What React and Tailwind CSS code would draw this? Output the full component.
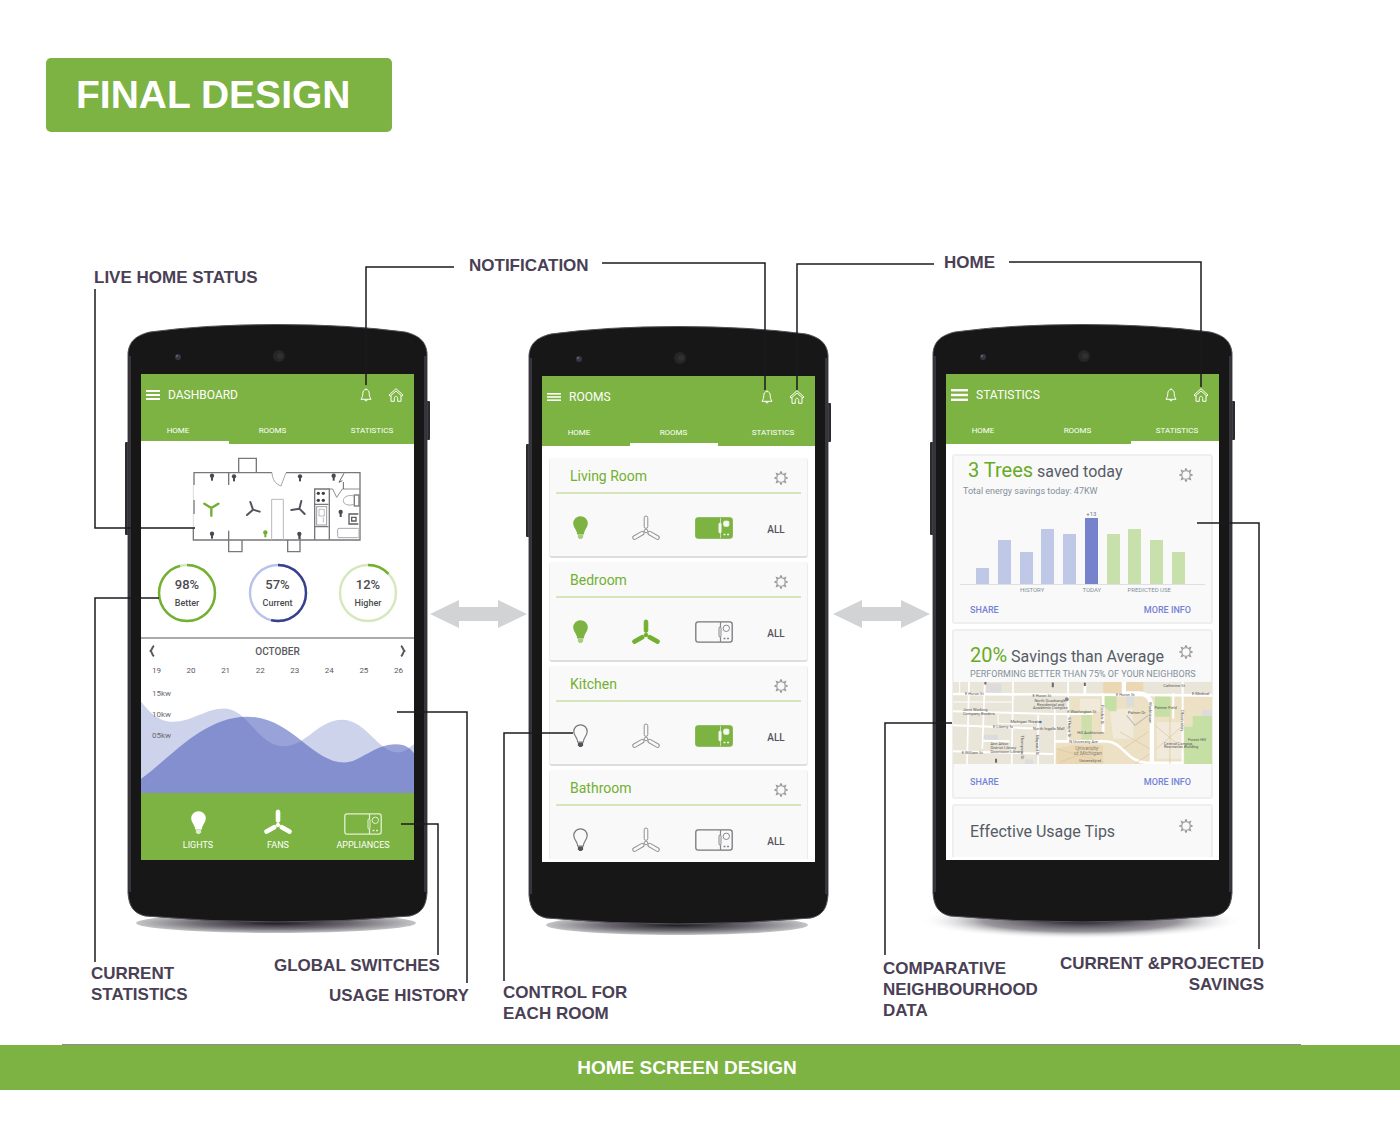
import React from "react";

/* ---------- icons ---------- */

function MenuIcon({ className }) {
  return (
    <svg className={className} viewBox="0 0 14 10" preserveAspectRatio="none" fill="#fff">
      <rect width="14" height="2" />
      <rect y="4" width="14" height="2" />
      <rect y="8" width="14" height="2" />
    </svg>
  );
}

function BellIcon() {
  return (
    <svg className="h-[14px] w-3" viewBox="0 0 12 14" fill="none" stroke="#fff" strokeWidth="1" strokeLinejoin="round">
      <path d="M6 1.5C3.8 1.6 2.8 3.4 2.8 5.4C2.8 7.8 2.2 9.4 1 11.3H11C9.8 9.4 9.2 7.8 9.2 5.4C9.2 3.4 8.2 1.6 6 1.5Z" />
      <path d="M6 .4V1.5M4.7 11.5C4.7 13.4 7.3 13.4 7.3 11.5" />
    </svg>
  );
}

function HomeIcon() {
  return (
    <svg className="h-[14px] w-4" viewBox="0 0 16 14" fill="none" stroke="#fff" strokeWidth="1" strokeLinejoin="round">
      <path d="M8 .7L15 7L13.9 8.2L8 3L2.1 8.2L1 7Z" />
      <path d="M3 7.6V13.3H6.3V10.4C6.3 7.6 9.7 7.6 9.7 10.4V13.3H13V7.6" />
    </svg>
  );
}

function BulbIcon({ fill = "none", stroke, base }) {
  return (
    <svg className="h-6 w-[15px]" viewBox="0 0 15 24">
      <path
        d="M7.5 .8A6.7 6.7 0 0 1 14.2 7.5C14.2 11.6 10.6 13.4 10.3 18H4.7C4.4 13.4 .8 11.6 .8 7.5A6.7 6.7 0 0 1 7.5 .8Z"
        fill={fill}
        stroke={stroke}
        strokeWidth="1.2"
      />
      <path d="M4.9 18.5H10.1V21.2L8.6 23H6.4L4.9 21.2Z" fill={base} />
    </svg>
  );
}

function FanIcon({ fill = "none", stroke }) {
  return (
    <svg className="h-[26px] w-7" viewBox="0 0 28 26" fill={fill} stroke={stroke} strokeWidth="1">
      {[0, 120, 240].map((a) => (
        <rect key={a} x="12.2" y="1" width="3.6" height="12.4" rx="1.8" transform={`rotate(${a} 14 16)`} />
      ))}
      <circle cx="14" cy="16" r="1.8" />
    </svg>
  );
}

function OvenIcon({ fill = "none", stroke, detail }) {
  const solid = fill !== "none";
  return (
    <svg className="h-[22px] w-[38px]" viewBox="0 0 38 22" fill="none" stroke={detail} strokeWidth="1">
      <rect x=".8" y=".8" width="36.4" height="20.4" rx="2.4" fill={fill} stroke={stroke} strokeWidth="1.3" />
      <path d="M25.500 1V6M25.500 16V21" strokeWidth={solid ? ".6" : "1.2"} />
      <rect x="24" y="6" width="2" height="10" rx="1" fill={solid ? detail : "none"} />
      {solid ? (
        <rect x="28.800" y="4.200" width="5" height="5" rx="1" fill={detail} />
      ) : (
        <circle cx="31.300" cy="7.300" r="3.200" />
      )}
      <path d="M28.500 17.500H30.500M32 17.500H34" strokeWidth="1.600" />
    </svg>
  );
}

function GearIcon() {
  return (
    <svg className="h-[14px] w-[14px]" viewBox="0 0 14 14" fill="none" stroke="#98989b" strokeWidth="1.1">
      <circle cx="7" cy="7" r="4.2" />
      {[0, 45, 90, 135, 180, 225, 270, 315].map((a) => (
        <path key={a} d="M6 2.600L7 .5L8 2.600" transform={`rotate(${a} 7 7)`} />
      ))}
    </svg>
  );
}

function DoubleArrow() {
  return (
    <svg className="h-7 w-[97px] shrink-0" viewBox="0 0 97 28" fill="#d1d3d4">
      <path d="M0 14L29 0V7H68V0L97 14L68 28V21H29V28Z" />
    </svg>
  );
}

/* ---------- phone ---------- */

function Phone({ id, className = "", shadow, children }) {
  return (
    <div className={`relative w-[306px] shrink-0 pt-[52px] pr-[17px] pb-[74px] pl-4 ${className}`}>
      <svg className="absolute inset-0 h-full w-full overflow-visible" viewBox="0 0 306 612">
        <defs>
          <radialGradient id={`${id}-shade`}>
            <stop offset="0" stopColor="#1d1a22" />
            <stop offset=".55" stopColor="#6d6a72" />
            <stop offset="1" stopColor="#c4c4c6" />
          </radialGradient>
          <radialGradient id={`${id}-soft`}>
            <stop offset="0" stopColor="#1d1a22" />
            <stop offset=".6" stopColor="#6d6a72" stopOpacity=".7" />
            <stop offset="1" stopColor="#fff" stopOpacity="0" />
          </radialGradient>
        </defs>
        {shadow === "soft" ? (
          <ellipse cx="151" cy="599" rx="162" ry="18" fill={`url(#${id}-soft)`} />
        ) : (
          <ellipse cx="151" cy="601" rx={shadow === "narrow" ? 131 : 140} ry="10" fill={`url(#${id}-shade)`} />
        )}
        <rect x="0" y="120" width="5" height="93" rx="1" fill="#2b2a2f" />
        <rect x="300" y="79" width="5" height="39" rx="1" fill="#2b2a2f" />
        <path
          d="M3 31C4 22 8 14 25 10Q80 2.500 152 2.500T280 10C297 14 301 22 302 31V571C301 584 297 591 285 594Q152 606 20 594C8 591 4 584 3 571Z"
          fill="#171717"
          stroke="#55505c"
          strokeWidth="1"
        />
        <path d="M5 34V570M300 34V570" stroke="#38363c" strokeWidth="2" />
        <circle cx="53" cy="35" r="3" fill="#3b3442" />
        <circle cx="52" cy="34" r="1" fill="#75607d" />
        <circle cx="154" cy="34" r="6" fill="#262626" />
        <circle cx="155" cy="34" r="3" fill="#303030" />
      </svg>
      <div className="relative flex h-[486px] flex-col overflow-hidden bg-white">{children}</div>
    </div>
  );
}

function AppBar({ title, menu, indicator }) {
  return (
    <header className="relative shrink-0 bg-[#7cb342] text-white">
      <div className="flex h-[41px] items-center pr-[10px] pl-[5px]">
        <button type="button" aria-label="Menu" className="flex">
          <MenuIcon className={menu} />
        </button>
        <h2 className="ml-2 grow text-xs font-normal">{title}</h2>
        <button type="button" aria-label="Notifications" className="mr-4 pt-px">
          <BellIcon />
        </button>
        <button type="button" aria-label="Home" className="pt-px">
          <HomeIcon />
        </button>
      </div>
      <nav className="grid h-[29px] grid-cols-[74px_1fr_84px] items-center pt-[2px] text-center text-[8px]">
        <a href="#home">HOME</a>
        <a href="#rooms">ROOMS</a>
        <a href="#statistics">STATISTICS</a>
      </nav>
      <span className={`absolute bottom-0 h-[3px] w-[88px] bg-white ${indicator}`} />
    </header>
  );
}

/* ---------- dashboard ---------- */

function MiniBulb({ x, y, color = "#4b4952" }) {
  return (
    <g fill={color}>
      <circle cx={x} cy={y - 3} r="6.500" />
      <rect x={x - 3} y={y} width="6" height="12" />
    </g>
  );
}

function FloorPlan() {
  return (
    <svg className="h-[98px] w-[174px]" viewBox="240 438 522 294" fill="none" stroke="#77777c" strokeWidth="4">
      <path d="M252 525V488H486M528 488H750V690H250V655M252 570V612" />
      <path d="M250 525V570M250 612V655" stroke="#dcdcdf" strokeWidth="3" />
      <path d="M386 488V445H439V488M356 690V725H396V690M533 690V725H570V672" />
      <path d="M356 488V525M356 662V690" />
      <path d="M486 488C487 508 496 522 513 528L528 488" stroke="#a9a9ad" strokeWidth="3" />
      <path d="M485 690V568H520V690" stroke="#b9b9bd" strokeWidth="3" />
      <path d="M614 690V537H658V690M614 583H655M614 650H655" />
      <rect x="620" y="590" width="30" height="55" stroke="#9c9ca0" strokeWidth="3" />
      <path d="M627 598H643V618H627ZM640 622V638" stroke="#9c9ca0" strokeWidth="2" />
      <path d="M658 537H668L680 562L697 537H750" stroke="#8d8d91" strokeWidth="3" />
      <path d="M702 490L687 517L697 512M700 516V537" stroke="#66666b" strokeWidth="3" />
      <rect x="733" y="555" width="14" height="33" />
      <path d="M733 558C712 553 700 562 700 572C700 582 714 589 733 583" stroke="#a9a9ad" strokeWidth="3" />
      <path d="M745 612H717V642H745M725 622H738V633H725Z" strokeWidth="4" stroke="#5d5d62" />
      <rect x="683" y="655" width="64" height="28" rx="4" stroke="#a9a9ad" strokeWidth="3" />
      <g fill="#3f3f44" stroke="none">
        <circle cx="625" cy="550" r="5" />
        <circle cx="640" cy="550" r="5" />
        <circle cx="625" cy="571" r="5" />
        <circle cx="640" cy="571" r="5" />
      </g>
      <g stroke="none">
        <MiniBulb x={306} y={500} />
        <MiniBulb x={372} y={502} />
        <MiniBulb x={570} y={502} />
        <MiniBulb x={671} y={500} />
        <MiniBulb x={692} y={609} />
        <MiniBulb x={306} y={674} />
        <MiniBulb x={568} y={675} />
        <MiniBulb x={466} y={670} color="#6fae2f" />
      </g>
      <g strokeLinecap="round" strokeWidth="7">
        <path d="M304 594L283 581M304 594L325 581M304 594V617" stroke="#6fae2f" />
        <path d="M429 599L421 576M429 599L449 605M429 599L411 615" stroke="#55535e" strokeWidth="6" />
        <path d="M568 596L574 573M568 596L544 600M568 596L584 612" stroke="#55535e" strokeWidth="6" />
      </g>
    </svg>
  );
}

const RINGS = [
  { value: "98%", label: "Better", track: "#d5e8bd", color: "#72b02f", part: 96 },
  { value: "57%", label: "Current", track: "#b9c3ea", color: "#37408f", part: 54 },
  { value: "12%", label: "Higher", track: "#d5e8bd", color: "#72b02f", part: 13 },
];

function Ring({ value, label, track, color, part }) {
  return (
    <div className="relative flex h-[60px] w-[60px] flex-col items-center justify-center pt-[2px] text-[#4b4a50]">
      <svg className="absolute inset-0" viewBox="0 0 60 60" fill="none" strokeWidth="2.400">
        <circle cx="30" cy="30" r="28" stroke={track} />
        <circle
          cx="30"
          cy="30"
          r="28"
          stroke={color}
          pathLength="100"
          strokeDasharray={`${part} 100`}
          transform="rotate(-90 30 30)"
        />
      </svg>
      <span className="text-[13px] leading-[18px] font-medium">{value}</span>
      <span className="text-[9px] leading-[18px] font-medium">{label}</span>
    </div>
  );
}

function Chevron({ flip }) {
  return (
    <svg
      className={flip ? "h-3 w-[6px] rotate-180" : "h-3 w-[6px]"}
      viewBox="0 0 6 12"
      fill="none"
      stroke="#5a5960"
      strokeWidth="2"
    >
      <path d="M5 .8C3 2 3.400 4.500 1.600 6C3.400 7.500 3 10 5 11.200" />
    </svg>
  );
}

function UsageChart() {
  return (
    <div className="relative grow">
      <svg className="absolute inset-0 h-full w-full" viewBox="141 680 273 112" preserveAspectRatio="none">
        <path
          d="M141 702C148 711 158 722 173 722C192 722 206 709 224 709C248 709 258 746 284 746C306 746 318 720 342 720C366 720 378 752 398 752C405 752 409 747 414 744V792H141Z"
          fill="#ced3ec"
        />
        <path
          d="M141 778C170 758 203 717 247 717C291 717 312 762 344 762C360 762 374 744 396 744C406 744 410 748 414 753V792H141Z"
          fill="#4757ba"
          fillOpacity=".55"
        />
      </svg>
      <ul className="relative flex flex-col gap-[13px] pt-[11px] pl-[11px] text-[8px] leading-2 text-[#6a6a72]">
        <li>15kw</li>
        <li>10kw</li>
        <li>05kw</li>
      </ul>
    </div>
  );
}

function DashboardScreen() {
  return (
    <>
      <AppBar title="DASHBOARD" menu="h-[10px] w-[14px]" indicator="left-0" />
      <div className="flex shrink-0 justify-center pt-3 pr-[2px]">
        <FloorPlan />
      </div>
      <div className="mt-[9px] flex shrink-0 justify-between px-4">
        {RINGS.map((r) => (
          <Ring key={r.label} {...r} />
        ))}
      </div>
      <section className="mt-[14px] flex grow flex-col border-t-2 border-[#a9a9ae] text-[#5a5960]">
        <div className="flex h-6 shrink-0 items-center justify-between px-2">
          <button type="button" aria-label="Previous month">
            <Chevron />
          </button>
          <h3 className="text-[10px] font-medium">OCTOBER</h3>
          <button type="button" aria-label="Next month">
            <Chevron flip />
          </button>
        </div>
        <ol className="flex h-4 shrink-0 items-center justify-between px-[11px] text-[8px]">
          {[19, 20, 21, 22, 23, 24, 25, 26].map((d) => (
            <li key={d}>{d}</li>
          ))}
        </ol>
        <UsageChart />
      </section>
      <footer className="grid h-[67px] shrink-0 grid-cols-[80px_80px_90px] items-end justify-items-center bg-[#7cb342] pb-[9px] pl-[17px] text-[9px] text-white">
        <button type="button" className="flex flex-col items-center gap-1 leading-3">
          <BulbIcon fill="#fff" stroke="#fff" base="#dcebc8" />
          LIGHTS
        </button>
        <button type="button" className="flex flex-col items-center gap-1 leading-3">
          <FanIcon fill="#fff" stroke="#fff" />
          FANS
        </button>
        <button type="button" className="flex flex-col items-center gap-1 leading-3">
          <OvenIcon stroke="#e4f0d6" detail="#e4f0d6" />
          APPLIANCES
        </button>
      </footer>
    </>
  );
}

/* ---------- rooms ---------- */

const ROOMS = [
  { name: "Living Room", light: true, fan: false, oven: true },
  { name: "Bedroom", light: true, fan: true, oven: false },
  { name: "Kitchen", light: false, fan: false, oven: true },
  { name: "Bathroom", light: false, fan: false, oven: false },
];

function RoomCard({ name, light, fan, oven }) {
  return (
    <section className="h-[100px] shrink-0 rounded-[3px] border-x border-b-2 border-[#ececee] border-b-[#dededf] bg-[#f9f9f9]">
      <div className="mx-[6px] flex h-9 items-center justify-between border-b-2 border-[#d5e6bb] pt-[2px] pr-[13px] pl-[14px]">
        <h3 className="text-sm text-[#72b02f]">{name}</h3>
        <button type="button" aria-label={`${name} settings`} className="pt-1">
          <GearIcon />
        </button>
      </div>
      <div className="grid grid-cols-[61px_69px_68px_56px] items-center justify-items-center pt-[21px]">
        <button type="button" aria-label={`${name} light`}>
          {light ? (
            <BulbIcon fill="#7cb342" stroke="#7cb342" base="#a9ce80" />
          ) : (
            <BulbIcon stroke="#77777c" base="#55535a" />
          )}
        </button>
        <button type="button" aria-label={`${name} fan`}>
          {fan ? <FanIcon fill="#72b02f" stroke="#72b02f" /> : <FanIcon stroke="#939396" />}
        </button>
        <button type="button" aria-label={`${name} oven`}>
          {oven ? (
            <OvenIcon fill="#7cb342" stroke="#7cb342" detail="#f4f9ee" />
          ) : (
            <OvenIcon stroke="#77777c" detail="#88888c" />
          )}
        </button>
        <button type="button" className="pt-[2px] text-[10px] font-medium text-[#55535a]">
          ALL
        </button>
      </div>
    </section>
  );
}

function RoomsScreen() {
  return (
    <>
      <AppBar title="ROOMS" menu="h-2 w-[14px]" indicator="left-[88px]" />
      <div className="mx-[7px] mt-3 mb-[3px] flex grow flex-col gap-1 overflow-hidden">
        {ROOMS.map((r) => (
          <RoomCard key={r.name} {...r} />
        ))}
      </div>
    </>
  );
}

/* ---------- statistics ---------- */

const BARS = [
  { h: 16, c: "#c0c8e8" },
  { h: 44, c: "#c0c8e8" },
  { h: 32, c: "#c0c8e8" },
  { h: 55, c: "#c0c8e8" },
  { h: 50, c: "#c0c8e8" },
  { h: 66, c: "#7682cc", tag: "+13" },
  { h: 50, c: "#c8e0ab" },
  { h: 55, c: "#c8e0ab" },
  { h: 44, c: "#c8e0ab" },
  { h: 32, c: "#c8e0ab" },
];

function SavingsChart() {
  return (
    <figure className="mx-[6px]">
      <div className="flex h-[82px] items-end justify-between border-b border-[#dfdfe2] pr-5 pl-4">
        {BARS.map((b, i) => (
          <div key={i} className="flex w-[13px] flex-col items-center">
            {b.tag && <span className="text-[6px] leading-2 text-[#6b7a88]">{b.tag}</span>}
            <div className="w-full" style={{ height: b.h, background: b.c }} />
          </div>
        ))}
      </div>
      <figcaption className="flex justify-between pr-[34px] pl-[60px] text-[6px] leading-[10px] text-[#83909b]">
        <span>HISTORY</span>
        <span className="ml-3">TODAY</span>
        <span>PREDICTED USE</span>
      </figcaption>
    </figure>
  );
}

function CardActions() {
  return (
    <div className="flex justify-between pr-5 pl-4 text-[9px] leading-3 font-medium text-[#7482d6]">
      <a href="#share">SHARE</a>
      <a href="#more">MORE INFO</a>
    </div>
  );
}

function NeighbourMap() {
  return (
    <svg className="block h-[82px] w-full" viewBox="0 0 776 246" preserveAspectRatio="xMidYMid slice">
      <rect width="776" height="246" fill="#e9e5d8" />
      <path d="M352 45H560V246H305V175H352ZM600 35H776V246H560V45Z" fill="#ede1c5" />
      <path d="M450 0H570V34H450ZM360 190H450V246H310V200Z" fill="#ead8b4" />
      <path d="M470 80H540V170H480ZM610 120H690V230H610ZM380 50H440V90H380Z" fill="#f1eadb" />
      <g fill="#c5dfa4">
        <path d="M448 42H490V88H470L448 70ZM605 38H652V104H605Z" />
        <path d="M385 88H416V172H385Z" opacity=".8" />
      </g>
      <g fill="#dcdcdc">
        <path d="M88 158H135V176H88ZM520 42H542V74H520ZM747 84H776V102H747ZM215 232H240V246H215ZM100 5H145V32H100Z" />
      </g>
      <g fill="none" stroke="#fff" strokeWidth="6">
        <path d="M0 36L776 40" strokeWidth="8" />
        <path d="M0 88L300 96H420M0 130L260 140M0 208L300 216M90 176L170 178" />
        <path d="M48 0L42 246M95 0L88 200M180 0L176 246M255 100V246M305 80V246M345 0V175" strokeWidth="5" />
        <path d="M305 178H460C510 180 520 240 580 242H690M450 34V150M395 0V40" strokeWidth="8" />
        <path d="M512 0V34H560C590 38 596 60 596 90V246" strokeWidth="13" />
        <path d="M688 0V246M660 34V110" />
        <path d="M0 60H180M135 95V125H240M20 0V36" strokeWidth="3" />
      </g>
      <path d="M693 134H718V102H776V246H693Z" fill="#c5dfa4" />
      <g fill="none" stroke="#d8c69b" strokeWidth="2">
        <path d="M310 200L450 240M320 240L440 196M500 150L590 200M510 200L585 150M545 246L590 215M605 130L690 200M610 200L690 130M650 105V246" />
      </g>
      <path d="M520 100L545 130L585 100" fill="none" stroke="#b9b9b9" strokeWidth="3" />
      <g fill="#57555a" fontFamily="Roboto, sans-serif" fontSize="12">
        <text x="36" y="40">E Huron St</text>
        <text x="238" y="46">E Huron St</text>
        <text x="488" y="42">E Huron St</text>
        <text x="716" y="38">E Medical</text>
        <text x="244" y="60">North Quadrangle</text>
        <text x="252" y="71">Residential and</text>
        <text x="240" y="82">Academic Complex</text>
        <text x="30" y="88">Joint Working</text>
        <text x="30" y="99">Company Borders</text>
        <text x="342" y="94">E Washington St</text>
        <text x="172" y="124">Michigan Theater</text>
        <text x="120" y="138">E Liberty St</text>
        <text x="240" y="145">North Ingalls Mall</text>
        <text x="524" y="96">Palmer Dr</text>
        <text x="372" y="156">Hill Auditorium</text>
        <text x="348" y="184">N University Ave</text>
        <text x="112" y="190">Ann Arbor</text>
        <text x="112" y="201">District Library</text>
        <text x="112" y="212">Downtown Library</text>
        <text x="26" y="217">E William St</text>
        <text x="632" y="188">Central Campus</text>
        <text x="632" y="199">Recreation Building</text>
        <text x="378" y="240">University of</text>
        <text x="630" y="14">Catherine St</text>
        <text x="604" y="80">Palmer Field</text>
        <text x="704" y="178">Forest Hill</text>
        <text transform="translate(204 160) rotate(90)">Thompson St</text>
        <text transform="translate(250 160) rotate(90)">Maynard St</text>
        <text transform="translate(346 106) rotate(90)">S Thayer St</text>
        <text transform="translate(443 70) rotate(90)">Fletcher St</text>
        <text transform="translate(586 60) rotate(90)">Washtenaw</text>
        <text transform="translate(684 84) rotate(90)">Observatory</text>
      </g>
      <g fill="#8b8578" fontFamily="Roboto, sans-serif" fontSize="16">
        <text x="366" y="204">University</text>
        <text x="362" y="219">of Michigan</text>
      </g>
      <circle cx="262" cy="120" r="4" fill="#5573c8" />
      <circle cx="341" cy="52" r="6" fill="#8b8a90" />
      <g fill="#6a686c">
        <path d="M296 2H302V16H296ZM392 2H398V12H392ZM94 0H100V8H94ZM126 230H132V242H126Z" />
      </g>
    </svg>
  );
}

function StatCard({ className = "", children }) {
  return (
    <section className={`relative shrink-0 rounded-[3px] border-2 border-[#efeff0] bg-[#f9f9f9] ${className}`}>
      {children}
    </section>
  );
}

function StatisticsScreen() {
  return (
    <>
      <AppBar title="STATISTICS" menu="h-3 w-[17px]" indicator="right-0" />
      <div className="mx-[6px] mt-[10px] mb-[3px] flex grow flex-col gap-[5px] overflow-hidden text-[#565c66]">
        <StatCard className="h-[170px]">
          <div className="flex justify-between pr-[18px] pl-[14px]">
            <h3 className="text-base leading-[27px] whitespace-nowrap">
              <span className="text-xl text-[#67ab25]">3 Trees</span> saved today
            </h3>
            <button type="button" aria-label="Savings settings" className="pt-2">
              <GearIcon />
            </button>
          </div>
          <p className="pl-[9px] text-[9px] leading-3 text-[#83909b]">Total energy savings today: 47KW</p>
          <div className="mt-[6px]">
            <SavingsChart />
          </div>
          <div className="mt-[9px]">
            <CardActions />
          </div>
        </StatCard>
        <StatCard className="h-[170px]">
          <div className="flex justify-between pt-3 pr-[18px] pl-4">
            <h3 className="text-base leading-6 whitespace-nowrap">
              <span className="text-xl leading-6 text-[#67ab25]">20%</span> Savings than Average
            </h3>
            <button type="button" aria-label="Comparison settings" className="pb-2">
              <GearIcon />
            </button>
          </div>
          <p className="pl-4 text-[9px] leading-[10px] whitespace-nowrap text-[#83909b]">
            PERFORMING BETTER THAN 75% OF YOUR NEIGHBORS
          </p>
          <div className="-mx-px mt-[3px] mb-3">
            <NeighbourMap />
          </div>
          <CardActions />
        </StatCard>
        <StatCard className="h-20">
          <div className="flex items-center justify-between pt-3 pr-[18px] pl-4">
            <h3 className="text-base leading-7">Effective Usage Tips</h3>
            <button type="button" aria-label="Tips settings" className="pb-3">
              <GearIcon />
            </button>
          </div>
        </StatCard>
      </div>
    </>
  );
}

/* ---------- callouts ---------- */

const LEADERS = [
  "95,289 95,528 195,528",
  "454,267 366,267 366,385",
  "602,263 765,263 765,390",
  "934,264 797,264 797,390",
  "1009,262 1201,262 1201,387",
  "159,598 95,598 95,962",
  "397,712 467,712 467,983",
  "401,824 438,824 438,955",
  "573,733 504,733 504,981",
  "952,723 885,723 885,955",
  "1197,523 1259,523 1259,949",
];

function Callouts() {
  return (
    <>
      <svg
        className="pointer-events-none absolute top-0 left-0 h-[804px] w-[1400px]"
        viewBox="0 240 1400 804"
        fill="none"
        stroke="#1c1a20"
        strokeWidth="1.500"
      >
        {LEADERS.map((p) => (
          <polyline key={p} points={p} />
        ))}
      </svg>
      <div className="text-[17px] leading-[21px] font-bold whitespace-nowrap text-[#4a4055]">
        <p className="absolute top-[27px] left-[94px]">LIVE HOME STATUS</p>
        <p className="absolute top-[15px] left-[469px]">NOTIFICATION</p>
        <p className="absolute top-[12px] left-[944px]">HOME</p>
        <p className="absolute top-[723px] left-[91px]">
          CURRENT
          <br />
          STATISTICS
        </p>
        <p className="absolute top-[715px] left-[274px]">GLOBAL SWITCHES</p>
        <p className="absolute top-[745px] left-[329px]">USAGE HISTORY</p>
        <p className="absolute top-[742px] left-[503px]">
          CONTROL FOR
          <br />
          EACH ROOM
        </p>
        <p className="absolute top-[718px] left-[883px]">
          COMPARATIVE
          <br />
          NEIGHBOURHOOD
          <br />
          DATA
        </p>
        <p className="absolute top-[713px] left-[1060px] text-right">
          CURRENT &amp;PROJECTED
          <br />
          SAVINGS
        </p>
      </div>
    </>
  );
}

export default function App() {
  return (
    <div className="flex min-h-screen flex-col bg-white font-['Liberation_Sans',Arial,sans-serif]">
      <div className="pt-[58px] pl-[46px]">
        <h1 className="inline-flex h-[74px] items-center rounded-[5px] bg-[#7cb342] pr-[42px] pb-[2px] pl-[30px] text-[39px] leading-none font-bold text-white">
          FINAL DESIGN
        </h1>
      </div>
      <main className="relative mx-auto mt-[108px] w-full max-w-[1400px] pb-[108px]">
        <div className="flex items-start pt-[82px] pl-[125px] font-[Roboto,sans-serif]">
          <Phone id="dash" shadow="wide">
            <DashboardScreen />
          </Phone>
          <div className="flex w-[95px] shrink-0 justify-center pt-[278px]">
            <DoubleArrow />
          </div>
          <Phone id="rooms" className="mt-[2px]" shadow="narrow">
            <RoomsScreen />
          </Phone>
          <div className="flex w-[98px] shrink-0 justify-center pt-[278px]">
            <DoubleArrow />
          </div>
          <Phone id="stats" shadow="soft">
            <StatisticsScreen />
          </Phone>
        </div>
        <Callouts />
      </main>
      <footer>
        <div className="mr-[99px] ml-[62px] h-px bg-[#918a96]" />
        <p className="bg-[#7cb342] pr-[26px] text-center text-[19px] leading-[45px] font-bold text-white">
          HOME SCREEN DESIGN
        </p>
      </footer>
    </div>
  );
}
